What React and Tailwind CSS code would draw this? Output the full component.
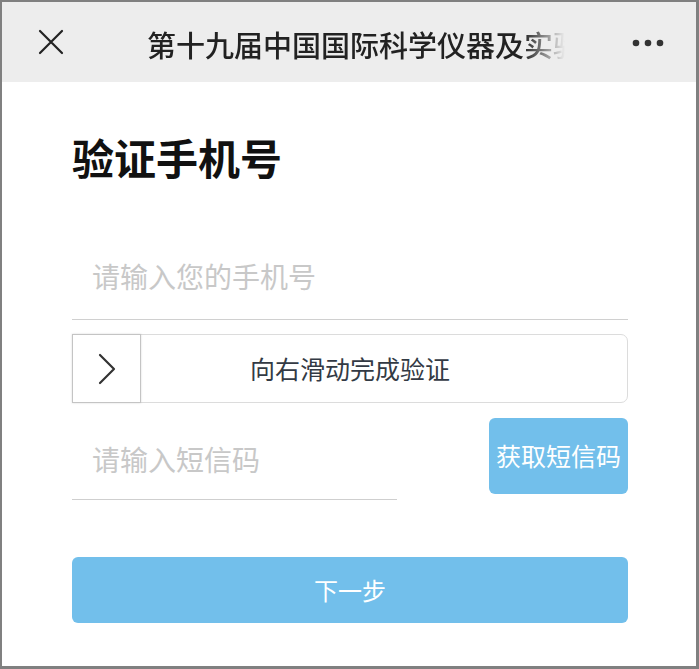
import React from 'react';

const font = { fontFamily: '"Noto Sans CJK SC", "Noto Sans", sans-serif' };

const CloseIcon = () => (
    <svg width="26" height="26" viewBox="0 0 26 26" fill="none" stroke="#222" strokeWidth="2.2" strokeLinecap="round">
        <path d="M2 2 L24 24 M24 2 L2 24" />
    </svg>
);

const MoreIcon = () => (
    <svg width="32" height="8" viewBox="0 0 32 8" fill="#333">
        <circle cx="4" cy="4" r="3.3" />
        <circle cx="16" cy="4" r="3.3" />
        <circle cx="28" cy="4" r="3.3" />
    </svg>
);

const Chevron = () => (
    <svg width="18" height="32" viewBox="0 0 18 32" fill="none" stroke="#333" strokeWidth="2.2" strokeLinecap="round" strokeLinejoin="round">
        <path d="M2 2 L16 16 L2 30" />
    </svg>
);

const App = () => {
    return (
        <div
            className="w-[699px] h-[669px] bg-white border-t-2 border-l-2 border-r-[3px] border-b-[3px] border-[#808080] flex flex-col"
            style={font}
        >
            {/* Top bar */}
            <div className="h-[80px] bg-[#ededed] flex items-center shrink-0">
                <div className="w-[36px]" />
                <CloseIcon />
                <div className="w-[83px]" />
                <div className="w-[418px] h-[36px] overflow-hidden whitespace-nowrap text-[29px] font-medium text-[#222] leading-[36px] pt-[2px] [mask-image:linear-gradient(to_right,black_90%,transparent_100%)]">
                    第十九届中国国际科学仪器及实验室装备展览会
                </div>
                <div className="flex-1" />
                <div className="pr-[32px] pt-[2px]">
                    <MoreIcon />
                </div>
            </div>

            {/* Form */}
            <div className="pl-[70px] pr-[68px] flex flex-col">
                <h1 className="mt-[54px] text-[42px] leading-[42px] font-bold text-[#111]">验证手机号</h1>

                <div className="mt-[55px] h-[87px] border-b border-[#d0d0d0] flex items-center pl-[20px]">
                    <span className="text-[28px] text-[#c8c8c8]">请输入您的手机号</span>
                </div>

                {/* Slider */}
                <div className="relative mt-[14px] h-[69px] border border-[#dcdcdc] rounded-[7px] flex items-center justify-center">
                    <span className="text-[25px] text-[#333a44]">向右滑动完成验证</span>
                    <div className="absolute left-[-1px] top-[-1px] w-[69px] h-[69px] bg-white border border-[#c4c4c4] shadow-[0_0_2px_rgba(0,0,0,0.15)] flex items-center justify-center">
                        <Chevron />
                    </div>
                </div>

                <div className="mt-[15px] flex items-start justify-between">
                    <div className="w-[325px] h-[82px] border-b border-[#cfcfcf] flex items-center pl-[20px]">
                        <span className="text-[28px] text-[#c8c8c8]">请输入短信码</span>
                    </div>
                    <div className="w-[139px] h-[76px] rounded-[6px] bg-[#72bfeb] flex items-center justify-center text-[25px] text-white">
                        获取短信码
                    </div>
                </div>

                <div className="mt-[57px] h-[66px] rounded-[6px] bg-[#72bfeb] flex items-center justify-center text-[24px] text-white">
                    下一步
                </div>
            </div>
        </div>
    );
};

export default App;
